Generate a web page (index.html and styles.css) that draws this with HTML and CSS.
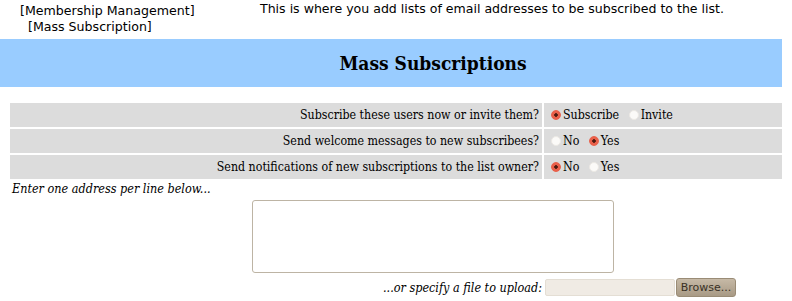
FILE: index.html
```html
<!DOCTYPE html>
<html lang="en">
<head>
    <meta charset="UTF-8">
    <title>Mass Subscriptions</title>
    <link rel="stylesheet" href="styles.css">
</head>
<body>
    <div class="top">
        <div class="crumbs">
            <div>[Membership Management]</div>
            <div class="sub">[Mass Subscription]</div>
        </div>
        <div class="intro">This is where you add lists of email addresses to be subscribed to the list.</div>
    </div>

    <div class="banner">Mass Subscriptions</div>

    <table class="opts">
        <tr>
            <td class="label">Subscribe these users now or invite them?</td>
            <td class="choice">
                <label><input type="radio" name="sub" checked>Subscribe</label>
                <label><input type="radio" name="sub">Invite</label>
            </td>
        </tr>
        <tr>
            <td class="label">Send welcome messages to new subscribees?</td>
            <td class="choice">
                <label><input type="radio" name="welcome">No</label>
                <label><input type="radio" name="welcome" checked>Yes</label>
            </td>
        </tr>
        <tr>
            <td class="label">Send notifications of new subscriptions to the list owner?</td>
            <td class="choice">
                <label><input type="radio" name="notify" checked>No</label>
                <label><input type="radio" name="notify">Yes</label>
            </td>
        </tr>
    </table>

    <div class="hint">Enter one address per line below...</div>

    <div class="area-row">
        <textarea class="addrs"></textarea>
    </div>

    <div class="upload">
        <span class="upload-label">...or specify a file to upload:</span>
        <span class="file-box"></span>
        <button class="browse">Browse...</button>
    </div>
</body>
</html>
```

FILE: styles.css
```css
* {
    box-sizing: border-box;
}

body {
    margin: 0;
    background: #fff;
    color: #000;
    font-family: 'DejaVu Serif Condensed', 'DejaVu Serif', serif;
    font-stretch: condensed;
    font-size: 12.5px;
}

.top {
    display: flex;
    font-family: 'DejaVu Sans', sans-serif;
    font-stretch: normal;
    height: 39px;
}

.crumbs {
    width: 260px;
    padding: 3px 0 0 20px;
    font-size: 12.6px;
    line-height: 16px;
}

.crumbs .sub {
    padding-left: 8px;
}

.intro {
    padding-top: 1px;
    font-size: 12.55px;
    line-height: 15px;
}

.banner {
    width: 782px;
    height: 48px;
    background: #99ccff;
    text-align: center;
    font-weight: bold;
    font-size: 19px;
    line-height: 49px;
    padding-left: 84px;
}

.opts {
    margin: 14px 10px 0 10px;
    width: 772px;
    border-collapse: separate;
    border-spacing: 0 2px;
    font-size: 12.3px;
}

.opts td {
    background: #dcdcdc;
    height: 24px;
    padding: 0;
}

.label {
    text-align: right;
    width: 534px;
    padding-right: 3px !important;
    border-right: 2px solid #fff;
}

.choice {
    padding-left: 7px !important;
}

.choice label {
    margin-right: 6px;
}

.choice input {
    -webkit-appearance: none;
    appearance: none;
    width: 10px;
    height: 10px;
    margin: 0 2px 0 0;
    border-radius: 50%;
    border: 1px solid #ece9e4;
    background: #fbfaf8;
    vertical-align: -1px;
}

.choice input:checked {
    border-color: #e9604a;
    background: radial-gradient(circle, #4a1a10 0 1.5px, #e9604a 2px);
}

.hint {
    font-style: italic;
    padding: 0 0 0 12px;
    line-height: 16px;
}

.area-row {
    padding: 3px 0 0 252px;
}

.addrs {
    display: block;
    width: 362px;
    height: 73px;
    border: 1px solid #bdb4a4;
    border-radius: 3px;
    resize: none;
    background: #fff;
}

.upload {
    display: flex;
    align-items: center;
    gap: 3px;
    padding: 5px 0 0 0;
    margin-left: 383px;
}

.upload-label {
    font-style: italic;
}

.file-box {
    width: 130px;
    height: 17px;
    background: #f0ebe4;
    border: 1px solid #e4ded4;
    border-radius: 2px;
}

.browse {
    font-family: 'DejaVu Sans', sans-serif;
    font-size: 11px;
    width: 60px;
    height: 19px;
    padding: 0;
    margin-left: -2px;
    color: #3a3226;
    background: linear-gradient(#c6b9a6, #a89a85);
    border: 1px solid #9a8c76;
    border-radius: 3px;
}
```
